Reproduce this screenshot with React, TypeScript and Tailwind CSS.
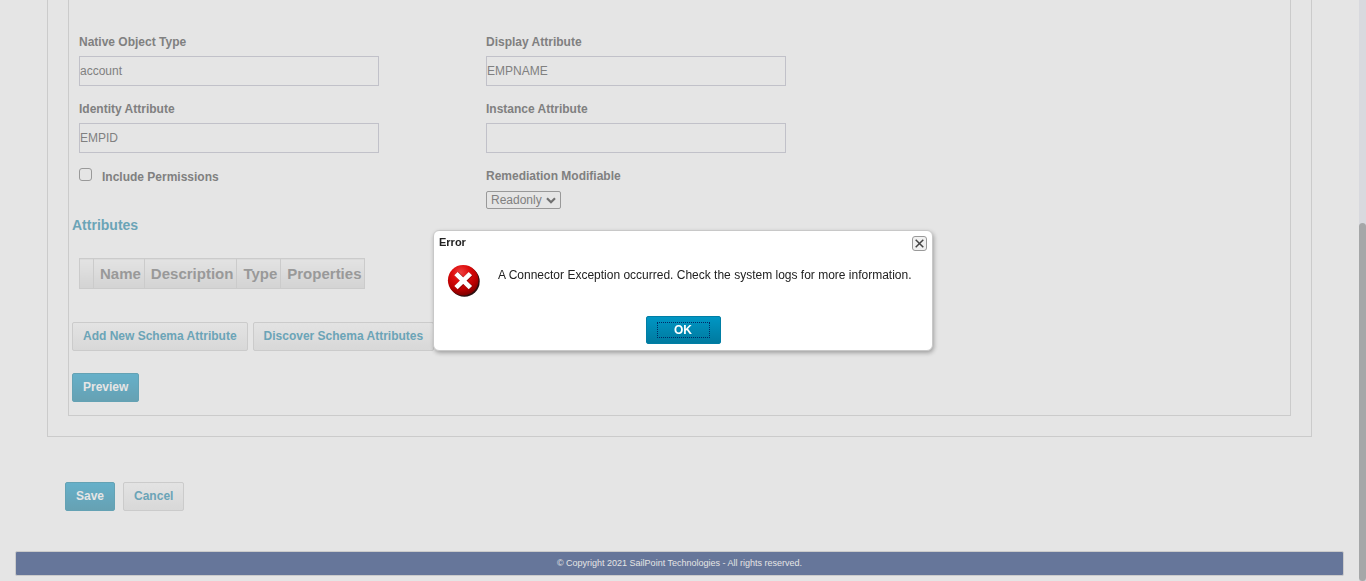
import type { ReactNode } from "react";

const secondaryButton =
  "h-[29px] rounded-xs border border-[#cbcbcb] bg-linear-to-b from-[#e3e3e3] to-[#d8d8d8] px-[10px] pb-[2px] text-[#6ba4b7]";
const primaryButton =
  "h-[29px] rounded-xs border border-[#64a2b4] bg-linear-to-b from-[#66b0c9] to-[#66a1b3] px-[10px] pb-[2px] text-[#e5e5e5]";

function Field({ id, label, value }: { id: string; label: string; value: string }) {
  return (
    <div className="flex flex-col gap-[6px] pl-[10px]">
      <label htmlFor={id} className="h-4 leading-4 font-bold">
        {label}
      </label>
      <input
        id={id}
        type="text"
        defaultValue={value}
        className="h-[30px] w-[300px] border border-[#c1c1c9] bg-transparent outline-none"
      />
    </div>
  );
}

function HeadCell({ children }: { children?: ReactNode }) {
  return (
    <th className="h-[30px] border border-[#cbcbcb] bg-linear-to-b from-[#e3e3e3] to-[#d3d3d3] pr-[3px] pl-[6px] text-left">
      {children}
    </th>
  );
}

function ErrorIcon() {
  return (
    <svg width="34" height="34" viewBox="0 0 34 34" aria-hidden="true">
      <defs>
        <radialGradient id="ball" cx="0.42" cy="0.25" r="0.8">
          <stop offset="0" stopColor="#ee4040" />
          <stop offset="0.35" stopColor="#dd0d0d" />
          <stop offset="0.7" stopColor="#b80000" />
          <stop offset="1" stopColor="#6d0000" />
        </radialGradient>
      </defs>
      <circle cx="17.4" cy="17.5" r="15.3" fill="#2a1010" />
      <circle cx="16.2" cy="16.2" r="15.3" fill="url(#ball)" />
      <path
        d="M9.6 9.8 23.8 23.8M23.8 9.8 9.6 23.8"
        stroke="#5c0000"
        strokeOpacity="0.6"
        strokeWidth="5.4"
      />
      <path d="M9 9.6 23.4 23.6M23.4 9.6 9 23.6" stroke="#fff" strokeWidth="4.8" />
    </svg>
  );
}

function ErrorDialog() {
  return (
    <div className="fixed inset-0 flex items-center justify-center">
      <div
        role="alertdialog"
        aria-labelledby="error-title"
        aria-describedby="error-text"
        className="flex w-[500px] flex-col rounded-md border border-[#c8c8c8] bg-white px-[5px] pb-[6px] text-[#222] shadow-[1px_2px_4px_rgba(0,0,0,0.3)]"
      >
        <div className="flex h-[26px] items-start justify-between pt-[5px]">
          <h2 id="error-title" className="text-[11px] leading-[13px] font-bold">
            Error
          </h2>
          <button
            type="button"
            aria-label="Close"
            className="flex size-[15px] items-center justify-center rounded-[3px] border border-[#999] bg-[#f1f1f1]"
          >
            <svg width="9" height="9" viewBox="0 0 9 9" aria-hidden="true">
              <path d="M.7.7 8.3 8.3M8.3.7.7 8.3" stroke="#444" strokeWidth="1.5" />
            </svg>
          </button>
        </div>
        <div className="flex h-[59px] gap-[17px] pt-[7px] pl-2">
          <ErrorIcon />
          <p id="error-text" className="pt-[3px] leading-4">
            A Connector Exception occurred. Check the system logs for more information.
          </p>
        </div>
        <button
          type="button"
          className="flex h-7 w-[75px] items-center justify-center self-center rounded-xs border border-[#007ea5] bg-linear-to-b from-[#0096c4] to-[#007a9f] font-bold text-white"
        >
          <span className="h-4 w-[53px] border border-dotted border-[#002a66] leading-[14px]">OK</span>
        </button>
      </div>
    </div>
  );
}

export default function App() {
  return (
    <div className="flex min-h-screen bg-[#e5e5e5] font-['Liberation_Sans',Arial,sans-serif] text-[12px] text-[#808080]">
      <div className="flex flex-1 flex-col">
        <main>
          <section className="mx-[47px] border-x border-b border-[#cbcbcb] px-5 pb-5">
            <div className="border-x border-b border-[#cbcbcb] pt-[34px] pb-[13px]">
              <form>
                <div className="grid grid-cols-3 gap-y-[15px]">
                  <Field id="native-type" label="Native Object Type" value="account" />
                  <Field id="display-attr" label="Display Attribute" value="EMPNAME" />
                  <span />
                  <Field id="identity-attr" label="Identity Attribute" value="EMPID" />
                  <Field id="instance-attr" label="Instance Attribute" value="" />
                  <span />
                  <div className="flex items-start gap-[10px] pl-[10px]">
                    <input
                      id="permissions"
                      type="checkbox"
                      className="size-[13px] appearance-none rounded-[3px] border border-[#999] bg-transparent"
                    />
                    <label htmlFor="permissions" className="leading-[18px] font-bold">
                      Include Permissions
                    </label>
                  </div>
                  <div className="flex flex-col items-start gap-[7px] pl-[10px]">
                    <label htmlFor="remediation" className="h-4 leading-4 font-bold">
                      Remediation Modifiable
                    </label>
                    <div className="grid items-center">
                      <select
                        id="remediation"
                        className="col-start-1 row-start-1 h-[18px] w-[75px] appearance-none rounded-xs border border-[#999] bg-transparent pl-1 leading-4"
                      >
                        <option>Readonly</option>
                      </select>
                      <svg
                        className="pointer-events-none col-start-1 row-start-1 mr-[5px] justify-self-end"
                        width="10"
                        height="7"
                        viewBox="0 0 10 7"
                        fill="none"
                        aria-hidden="true"
                      >
                        <path d="M1 1.2 5 5.2 9 1.2" stroke="#707070" strokeWidth="2.2" />
                      </svg>
                    </div>
                  </div>
                </div>

                <h2 className="mt-[6px] pl-[3px] text-[14px] leading-5 font-bold text-[#6ba4b7]">Attributes</h2>

                <table className="mt-[23px] ml-[10px] border-collapse text-[15px] leading-5 text-[#999]">
                  <thead>
                    <tr>
                      <HeadCell>
                        <span className="block w-[4px]" />
                      </HeadCell>
                      <HeadCell>Name</HeadCell>
                      <HeadCell>Description</HeadCell>
                      <HeadCell>Type</HeadCell>
                      <HeadCell>Properties</HeadCell>
                    </tr>
                  </thead>
                </table>

                <div className="mt-[33px] flex gap-[5px] pl-[3px] font-bold">
                  <button type="button" className={secondaryButton}>
                    Add New Schema Attribute
                  </button>
                  <button type="button" className={secondaryButton}>
                    Discover Schema Attributes
                  </button>
                </div>
                <div className="mt-[22px] flex pl-[3px] font-bold">
                  <button type="button" className={primaryButton}>
                    Preview
                  </button>
                </div>
              </form>
            </div>
          </section>
          <div className="mt-[45px] flex gap-2 pl-[65px] font-bold">
            <button type="button" className={primaryButton}>
              Save
            </button>
            <button type="button" className={secondaryButton}>
              Cancel
            </button>
          </div>
        </main>
        <footer className="mx-[15px] mt-10 mb-[5px] rounded-xs border border-[#cbcbcb] bg-[#66769a] text-center text-[9px] leading-[23px] text-[#e5e5e5]">
          © Copyright 2021 SailPoint Technologies - All rights reserved.
        </footer>
      </div>
      <div className="flex w-[7px] flex-col bg-[#d8d9de]" aria-hidden="true">
        <div className="mt-[223px] flex-1 rounded-full bg-[#a5a7a8]" />
      </div>
      <ErrorDialog />
    </div>
  );
}
